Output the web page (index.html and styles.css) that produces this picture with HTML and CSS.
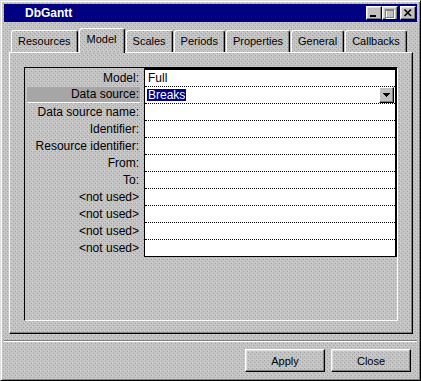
FILE: index.html
```html
<!DOCTYPE html>
<html>
<head>
  <title>DbGantt</title>
  <link rel="stylesheet" href="styles.css">
</head>
<body>
  <div class="window">
    <div class="titlebar">
      <span class="title">DbGantt</span>
      <div class="title-buttons">
        <button class="tbtn">
          <svg width="14" height="12" shape-rendering="crispEdges"><rect x="3" y="8" width="6" height="2" fill="#000"/></svg>
        </button>
        <button class="tbtn" disabled>
          <svg width="14" height="12" shape-rendering="crispEdges">
            <rect x="3" y="3" width="8" height="8" fill="none" stroke="#fff"/>
            <rect x="2" y="2" width="8" height="8" fill="none" stroke="#808080"/>
            <rect x="2" y="2" width="8" height="2" fill="#808080"/>
          </svg>
        </button>
        <button class="tbtn close">
          <svg width="14" height="12"><path d="M3.5 2.5 L10 9 M10 2.5 L3.5 9" stroke="#000" stroke-width="1.6"/></svg>
        </button>
      </div>
    </div>

    <div class="tabs">
      <div class="tab">Resources</div>
      <div class="tab active">Model</div>
      <div class="tab">Scales</div>
      <div class="tab">Periods</div>
      <div class="tab">Properties</div>
      <div class="tab">General</div>
      <div class="tab">Callbacks</div>
    </div>

    <div class="panel">
      <div class="frame">
        <div class="grid">
          <div class="labels">
            <div class="label">Model:</div>
            <div class="label selected">Data source:</div>
            <div class="label">Data source name:</div>
            <div class="label">Identifier:</div>
            <div class="label">Resource identifier:</div>
            <div class="label">From:</div>
            <div class="label">To:</div>
            <div class="label">&lt;not used&gt;</div>
            <div class="label">&lt;not used&gt;</div>
            <div class="label">&lt;not used&gt;</div>
            <div class="label">&lt;not used&gt;</div>
          </div>
          <div class="values">
            <div class="value"><span class="val-text">Full</span></div>
            <div class="value">
              <span class="val-text hl">Breaks</span>
              <span class="drop"><svg width="7" height="4" shape-rendering="crispEdges"><polygon points="0,0 7,0 3.5,4" fill="#000"/></svg></span>
            </div>
            <div class="value"></div>
            <div class="value"></div>
            <div class="value"></div>
            <div class="value"></div>
            <div class="value"></div>
            <div class="value"></div>
            <div class="value"></div>
            <div class="value"></div>
            <div class="value"></div>
          </div>
        </div>
      </div>
    </div>

    <div class="separator"></div>
    <div class="actions">
      <button class="btn">Apply</button>
      <button class="btn">Close</button>
    </div>
  </div>
</body>
</html>
```

FILE: styles.css
```css
body{
  margin: 0;
  font-family: "Liberation Sans", Arial, sans-serif;
}

.window{
  --face: #c4c4c4 url("data:image/svg+xml,%3Csvg xmlns='http://www.w3.org/2000/svg' width='4' height='4'%3E%3Crect x='0' y='0' width='1' height='1' fill='%23a2a2a2'/%3E%3Crect x='2' y='2' width='1' height='1' fill='%23a2a2a2'/%3E%3Crect x='3' y='1' width='1' height='1' fill='%23d2d2d2'/%3E%3C/svg%3E");
  width: 421px;
  height: 381px;
  box-sizing: border-box;
  padding: 3px;
  border: 1px solid;
  border-color: #dfdfdf #000 #000 #dfdfdf;
  box-shadow: inset 1px 1px #fff, inset -1px -1px #808080;
  background: var(--face);
}

.titlebar{
  height: 18px;
  background-color: #000080;
  display: flex;
  align-items: center;
  padding: 0 1px 0 21px;
}

.title{
  flex: 1;
  color: white;
  font-weight: bold;
  font-size: 12px;
}

.title-buttons{
  display: flex;
}

.tbtn{
  width: 16px;
  height: 14px;
  padding: 0;
  border: 1px solid;
  border-color: #fff #000 #000 #fff;
  box-shadow: inset -1px -1px #808080, inset 1px 1px #dfdfdf;
  background-color: #c0c0c0;
  display: flex;
}
.tbtn.close{
  margin-left: 2px;
}

.tabs{
  display: flex;
  align-items: flex-end;
  height: 24px;
  margin: 6px 0 0 7px;
  position: relative;
  z-index: 1;
}

.tab{
  height: 22px;
  box-sizing: border-box;
  padding: 0 6px;
  margin-right: 1px;
  border: 1px solid;
  border-bottom: 0;
  border-color: #fff #000 transparent #fff;
  border-radius: 3px 3px 0 0;
  box-shadow: inset -1px 0 #808080;
  background: var(--face);
  font-size: 11px;
  line-height: 21px;
}
.tab.active{
  height: 25px;
  margin-bottom: -1px;
  padding: 0 7px 2px;
  line-height: 20px;
}

.panel{
  height: 282px;
  box-sizing: border-box;
  margin: 0 4px 0 5px;
  padding: 14px 14px 12px 14px;
  border: 1px solid;
  border-color: #fff #000 #000 #fff;
  box-shadow: inset -1px -1px #808080;
}

.frame{
  height: 254px;
  box-sizing: border-box;
  border: 1px solid;
  border-color: #000 #fff #fff #000;
}

.grid{
  display: flex;
}

.labels{
  width: 119px;
  padding-top: 2px;
}

.label{
  height: 16px;
  box-sizing: border-box;
  margin-bottom: 1px;
  padding-right: 5px;
  text-align: right;
  font-size: 12px;
  line-height: 16px;
}
.label.selected{
  margin: 0 4px 1px 2px;
  padding-right: 1px;
  background-color: #a6a6a6;
  border-bottom: 1px solid #fff;
  line-height: 15px;
}

.values{
  flex: 1;
  background-color: white;
  border: solid #000;
  border-width: 2px 2px 1px 1px;
}

.value{
  height: 16px;
  border-bottom: 1px dotted #000;
  display: flex;
  align-items: center;
  padding-left: 2px;
  font-size: 12px;
}
.value:last-child{
  border-bottom: 0;
}

.val-text{
  padding: 0 1px;
  line-height: 12px;
}
.val-text.hl{
  background-color: #000080;
  color: white;
}

.drop{
  margin-left: auto;
  margin-right: 1px;
  width: 15px;
  height: 16px;
  box-sizing: border-box;
  border: 1px solid;
  border-color: #fff #000 #000 #fff;
  box-shadow: inset -1px -1px #808080;
  background-color: #c0c0c0;
  display: flex;
  align-items: center;
  justify-content: center;
}

.separator{
  margin-top: 6px;
  border-top: 1px solid #808080;
  border-bottom: 1px solid #fff;
}

.actions{
  display: flex;
  justify-content: flex-end;
  gap: 6px;
  margin: 7px 6px 0 0;
}

.btn{
  width: 80px;
  height: 23px;
  padding: 0;
  border: 1px solid;
  border-color: #fff #000 #000 #fff;
  box-shadow: inset -1px -1px #808080, inset 1px 1px #dfdfdf;
  background: var(--face);
  font-family: "Liberation Sans", Arial, sans-serif;
  font-size: 11px;
  color: black;
}
```
